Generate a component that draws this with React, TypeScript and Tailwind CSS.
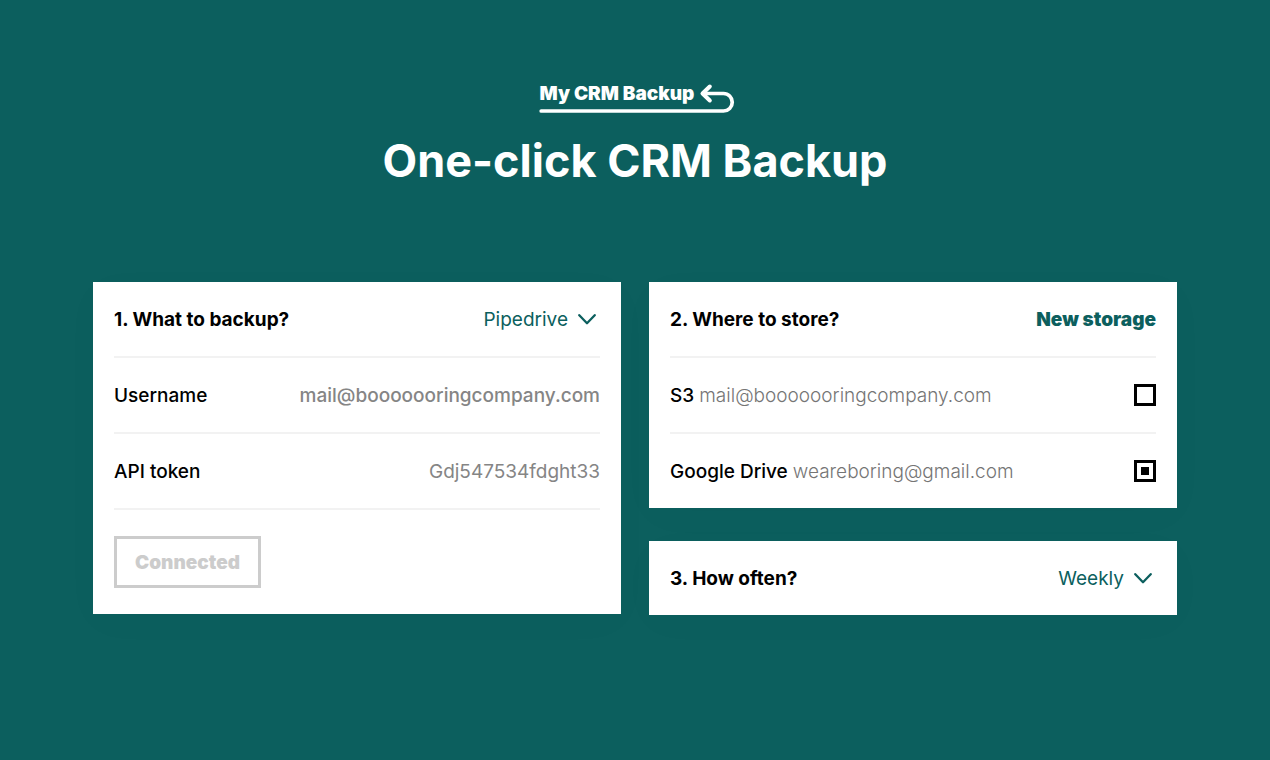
import { useState } from "react";

const storages = [
  { id: "s3", name: "S3", account: "mail@booooooringcompany.com" },
  { id: "drive", name: "Google Drive", account: "weareboring@gmail.com" },
];

function Logo() {
  return (
    <a href="#" className="relative h-8 pt-px pr-10 pl-1 text-white">
      <span className="block text-[19px] leading-[25px] font-black whitespace-nowrap">
        My CRM Backup
      </span>
      <svg
        className="absolute top-px left-[3px]"
        width="196"
        height="34"
        viewBox="0 0 196 34"
        fill="none"
        stroke="currentColor"
        strokeWidth="4"
        strokeLinecap="round"
        strokeLinejoin="round"
        aria-hidden="true"
      >
        <path d="M2.200 30H184.500a8.750 8.750 0 0 0 0-17.500H165" strokeWidth="3.7" />
        <path d="M170.800 5.500l-7.300 7 7.300 7" />
      </svg>
    </a>
  );
}

function Dropdown({ id, options }: { id: string; options: string[] }) {
  return (
    <div className="relative flex items-center text-[#0c5f5e]">
      <select
        id={id}
        defaultValue={options[0]}
        className="field-sizing-content appearance-none bg-transparent pr-8 text-[19px] leading-[29px] font-normal outline-none"
      >
        {options.map((option) => (
          <option key={option}>{option}</option>
        ))}
      </select>
      <svg
        className="pointer-events-none absolute right-1"
        width="18"
        height="12"
        viewBox="0 0 18 12"
        fill="none"
        stroke="currentColor"
        strokeWidth="2.3"
        strokeLinecap="round"
        strokeLinejoin="round"
        aria-hidden="true"
      >
        <path d="M1.300 2.200L9 10.200l7.700-8" />
      </svg>
    </div>
  );
}

export default function App() {
  const [selected, setSelected] = useState<string[]>(["drive"]);

  const toggle = (id: string) =>
    setSelected((prev) =>
      prev.includes(id) ? prev.filter((item) => item !== id) : [...prev, id]
    );

  return (
    <main className="min-h-screen bg-[#0c5f5e] px-6 py-20 font-['Inter',sans-serif] text-[19px] leading-[29px] text-black">
      <header className="flex flex-col items-center text-white">
        <Logo />
        <h1 className="mt-5 text-center text-[45px] leading-[58px] font-bold">
          One-click CRM Backup
        </h1>
      </header>

      <div className="mx-auto mt-23 grid max-w-[1084px] items-start gap-7 md:grid-cols-2">
        <section className="bg-white px-[21px] pb-[26px] shadow-[0_8px_40px_rgba(0,0,0,0.02)]">
          <div className="flex h-19 items-center justify-between border-b-2 border-[#f2f2f2]">
            <h2 className="font-bold">
              <label htmlFor="source">1. What to backup?</label>
            </h2>
            <Dropdown id="source" options={["Pipedrive", "HubSpot", "Salesforce"]} />
          </div>
          <div className="flex h-19 items-center justify-between gap-4 border-b-2 border-[#f2f2f2]">
            <label htmlFor="username" className="font-medium">
              Username
            </label>
            <input
              id="username"
              type="text"
              defaultValue="mail@booooooringcompany.com"
              className="min-w-0 flex-1 text-right font-medium text-[#858585] outline-none"
            />
          </div>
          <div className="flex h-19 items-center justify-between gap-4 border-b-2 border-[#f2f2f2]">
            <label htmlFor="token" className="font-medium">
              API token
            </label>
            <input
              id="token"
              type="text"
              defaultValue="Gdj547534fdght33"
              className="min-w-0 flex-1 text-right text-[#858585] outline-none"
            />
          </div>
          <button
            type="button"
            className="mt-[26px] block h-[52px] border-3 border-[#cccccc] px-[18px] font-black text-[#cccccc]"
          >
            Connected
          </button>
        </section>

        <div className="flex flex-col gap-[33px]">
          <section className="bg-white px-[21px] shadow-[0_8px_40px_rgba(0,0,0,0.02)]">
            <div className="flex h-19 items-center justify-between border-b-2 border-[#f2f2f2]">
              <h2 className="font-bold">2. Where to store?</h2>
              <button type="button" className="font-black text-[#0c5f5e]">
                New storage
              </button>
            </div>
            {storages.map((storage) => (
              <div
                key={storage.id}
                className="flex h-19 items-center justify-between border-b-2 border-[#f2f2f2] last:h-[74px] last:border-b-0"
              >
                <label htmlFor={storage.id} className="font-medium">
                  {storage.name}{" "}
                  <span className="font-light text-[#757575]">{storage.account}</span>
                </label>
                <input
                  id={storage.id}
                  type="checkbox"
                  checked={selected.includes(storage.id)}
                  onChange={() => toggle(storage.id)}
                  className="grid size-[22px] appearance-none place-items-center border-3 border-black before:size-2 checked:before:bg-black"
                />
              </div>
            ))}
          </section>

          <section className="flex h-[74px] items-center justify-between bg-white px-[21px] shadow-[0_8px_40px_rgba(0,0,0,0.02)]">
            <h2 className="font-bold">
              <label htmlFor="schedule">3. How often?</label>
            </h2>
            <Dropdown id="schedule" options={["Weekly", "Daily", "Monthly"]} />
          </section>
        </div>
      </div>
    </main>
  );
}
